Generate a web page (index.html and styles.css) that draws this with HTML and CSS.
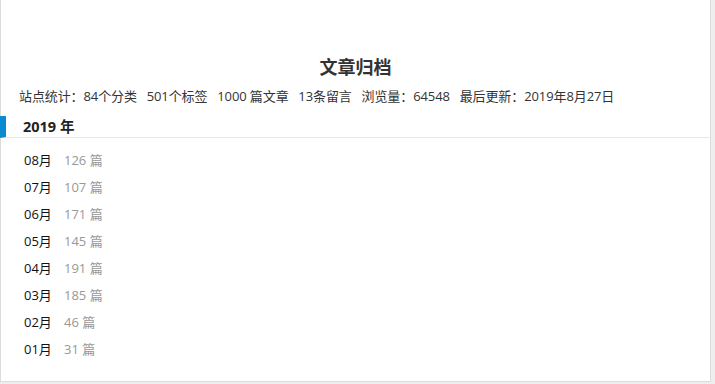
FILE: index.html
```html
<!DOCTYPE html>
<html lang="zh-CN">
<head>
<meta charset="utf-8">
<title>文章归档</title>
<link rel="stylesheet" href="styles.css">
</head>
<body>
<div class="card">
  <h1 class="title">文章归档</h1>
  <p class="stats">站点统计：84个分类&nbsp;&nbsp; 501个标签&nbsp;&nbsp; 1000 篇文章&nbsp;&nbsp; 13条留言&nbsp;&nbsp; 浏览量：64548&nbsp;&nbsp; 最后更新：2019年8月27日</p>
  <div class="year">2019 年</div>
  <ul class="months">
    <li><span class="m">08月</span><span class="n">126 篇</span></li>
    <li><span class="m">07月</span><span class="n">107 篇</span></li>
    <li><span class="m">06月</span><span class="n">171 篇</span></li>
    <li><span class="m">05月</span><span class="n">145 篇</span></li>
    <li><span class="m">04月</span><span class="n">191 篇</span></li>
    <li><span class="m">03月</span><span class="n">185 篇</span></li>
    <li><span class="m">02月</span><span class="n">46 篇</span></li>
    <li><span class="m">01月</span><span class="n">31 篇</span></li>
  </ul>
</div>
</body>
</html>
```
FILE: styles.css
```css
html, body {
  margin: 0;
  padding: 0;
}
body {
  background: #eeeeee;
  font-family: "Open Sans", "Noto Sans CJK SC", sans-serif;
  color: #333;
  height: 384px;
  overflow: hidden;
}
.card {
  width: 711px;
  box-sizing: border-box;
  background: #fff;
  border: 1px solid #dcdcdc;
  border-top: none;
  padding: 55px 0 18px;
}
.title {
  margin: 0;
  text-align: center;
  font-size: 18px;
  line-height: 24px;
  font-weight: bold;
  color: #333;
}
.stats {
  margin: 7px 0 0;
  padding-left: 18px;
  font-size: 13px;
  line-height: 20px;
  letter-spacing: -0.1px;
  color: #333;
  white-space: nowrap;
}
.year {
  margin: 10px 0 0 -1px;
  height: 21px;
  line-height: 21px;
  border-left: 6px solid #0a8bd0;
  border-bottom: 1px solid #e6e6e6;
  padding-left: 17px;
  font-size: 14.5px;
  font-weight: bold;
  color: #222;
}
.months {
  list-style: none;
  margin: 0;
  padding: 9px 0 0 23px;
}
.months li {
  height: 27px;
  line-height: 27px;
  font-size: 13px;
  display: flex;
}
.m {
  width: 40px;
  color: #111;
}
.n {
  color: #999;
}
```
